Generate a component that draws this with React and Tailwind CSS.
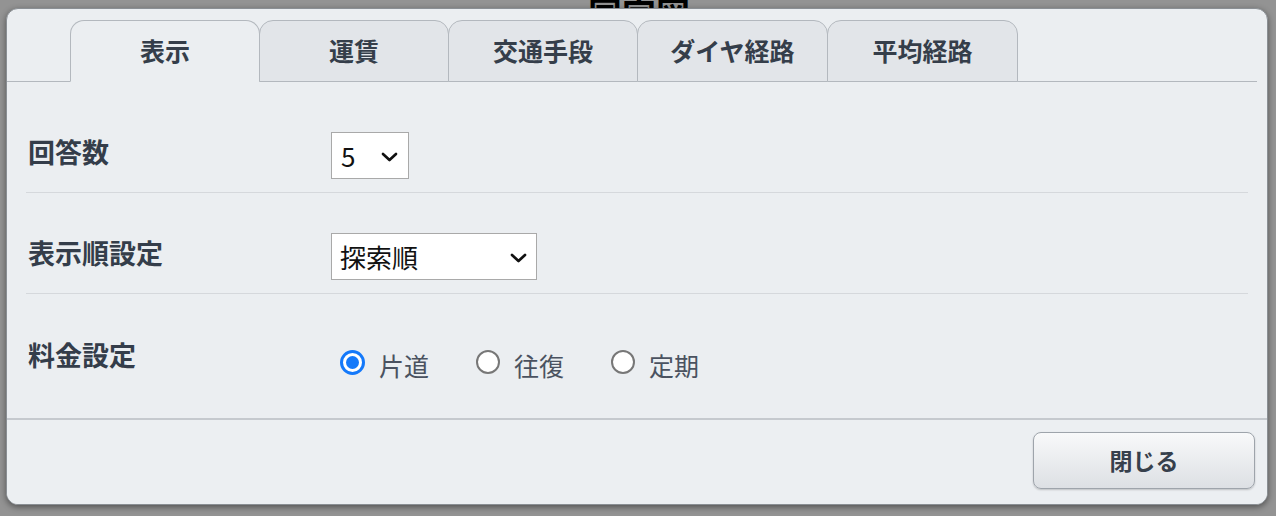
import React from "react";

const FONT = { fontFamily: '"Noto Sans CJK JP", "Noto Sans", sans-serif' };

function Chevron() {
  return (
    <svg width="17" height="10" viewBox="0 0 17 10" fill="none" className="mt-[2px]">
      <path d="M2 2 L8.5 8 L15 2" stroke="#111" strokeWidth="2.7" strokeLinecap="round" strokeLinejoin="round" />
    </svg>
  );
}

function Tab({ label, active, first, wide }) {
  return (
    <div
      className={
        "h-[62px] -mb-px flex items-center justify-center rounded-t-[14px] border border-[#b3b8be] text-[25px] font-bold text-[#353e4a] " +
        (wide ? "w-[191px] " : "w-[190px] ") +
        (first ? "" : "-ml-px ") +
        (active ? "bg-[#ebeef1] border-b-[#ebeef1]" : "bg-[#e2e5e9] border-b-[#b3b8be]")
      }
    >
      {label}
    </div>
  );
}

function Radio({ label, checked }) {
  return (
    <div className="flex items-center mr-[47px]">
      {checked ? (
        <div className="w-[25px] h-[25px] rounded-full border-[3px] border-[#1479fa] bg-white flex items-center justify-center">
          <div className="w-[13px] h-[13px] rounded-full bg-[#1479fa]" />
        </div>
      ) : (
        <div className="w-[24px] h-[24px] rounded-full border-2 border-[#777] bg-white" />
      )}
      <span className="ml-[14px] mt-[6px] text-[25px] text-[#4a5260] leading-none">{label}</span>
    </div>
  );
}

export default function App() {
  return (
    <div className="w-[1276px] h-[516px] bg-[#939393] overflow-hidden relative" style={FONT}>
      <div className="h-[8px] overflow-hidden flex justify-center items-end">
        <div className="text-[34px] font-bold text-black leading-none -mb-[22px] ml-[2px]">国完図</div>
      </div>
      <div className="ml-[6px] w-[1262px] h-[497px] bg-[#ebeef1] rounded-[12px] border border-[#8a8f94] shadow-[0_2px_6px_rgba(0,0,0,0.45)] flex flex-col overflow-hidden">
        <div className="pt-[11px] mr-[10px] flex items-end pl-[63px] border-b border-[#b3b8be]">
          <Tab label="表示" active first />
          <Tab label="運賃" />
          <Tab label="交通手段" />
          <Tab label="ダイヤ経路" wide />
          <Tab label="平均経路" wide />
        </div>
        <div className="flex-1 pt-[10px] px-[19px]">
          <div className="flex items-start pt-[40px] pb-[13px] border-b border-[#d5d8dc]">
            <div className="w-[305px] pl-[2px] text-[27px] font-bold text-[#343d4a] leading-[40px]">回答数</div>
            <div className="w-[78px] h-[47px] bg-white border border-[#a9a9a9] flex items-center justify-between pl-[9px] pr-[10px] text-[26px] text-[#111]">
              <span>5</span>
              <Chevron />
            </div>
          </div>
          <div className="flex items-start pt-[40px] pb-[13px] border-b border-[#d5d8dc]">
            <div className="w-[305px] pl-[2px] text-[27px] font-bold text-[#343d4a] leading-[40px]">表示順設定</div>
            <div className="w-[206px] h-[47px] bg-white border border-[#a9a9a9] flex items-center justify-between pl-[8px] pr-[9px] text-[26px] text-[#111]">
              <span>探索順</span>
              <Chevron />
            </div>
          </div>
          <div className="flex items-start pt-[41px]">
            <div className="w-[305px] pl-[2px] text-[27px] font-bold text-[#343d4a] leading-[40px]">料金設定</div>
            <div className="flex items-center h-[54px] pl-[9px]">
              <Radio label="片道" checked />
              <Radio label="往復" />
              <Radio label="定期" />
            </div>
          </div>
        </div>
        <div className="h-[86px] border-t-2 border-[#c5c9ce] bg-[#eceff2] flex justify-end items-start pt-[12px] pr-[12px]">
          <button className="w-[222px] h-[57px] rounded-[8px] border border-[#9ea4ab] bg-gradient-to-b from-[#f8f9fa] to-[#dde0e4] shadow-[0_1px_2px_rgba(0,0,0,0.2)] text-[23px] font-bold text-[#37404c]">
            閉じる
          </button>
        </div>
      </div>
    </div>
  );
}
